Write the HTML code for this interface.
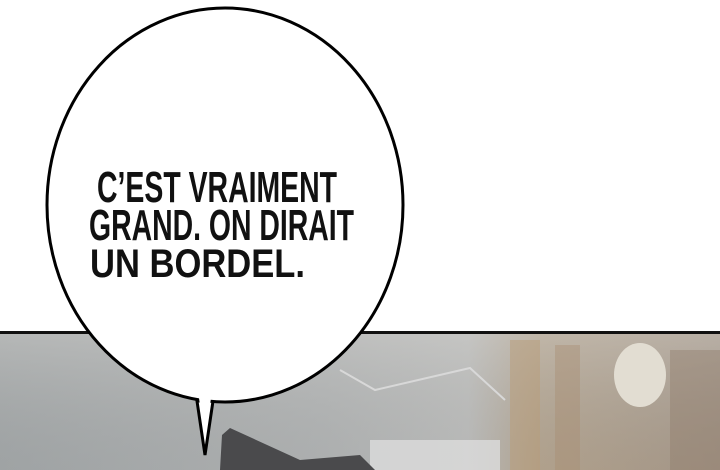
<!DOCTYPE html>
<html><head><meta charset="utf-8"><style>
html,body{margin:0;padding:0;width:720px;height:470px;overflow:hidden;background:#fff}
</style></head><body>
<svg width="720" height="470" viewBox="0 0 720 470" xmlns="http://www.w3.org/2000/svg">
<defs>
<linearGradient id="bg" x1="0" y1="0" x2="1" y2="0">
<stop offset="0" stop-color="#a3a7a8"/>
<stop offset="0.45" stop-color="#b4b6b6"/>
<stop offset="0.65" stop-color="#c2c2c0"/>
<stop offset="0.75" stop-color="#b8a48a"/>
<stop offset="1" stop-color="#a89684"/>
</linearGradient>
<linearGradient id="fade" x1="0" y1="0" x2="0" y2="1">
<stop offset="0" stop-color="#c8c8c6" stop-opacity="0.5"/>
<stop offset="1" stop-color="#8e9294" stop-opacity="0.2"/>
</linearGradient>
</defs>
<rect x="0" y="333" width="720" height="137" fill="url(#bg)"/>
<rect x="0" y="333" width="720" height="137" fill="url(#fade)"/>
<rect x="510" y="340" width="30" height="130" fill="#b89c78" opacity="0.5"/>
<rect x="555" y="345" width="25" height="125" fill="#a88c70" opacity="0.4"/>
<ellipse cx="640" cy="375" rx="26" ry="32" fill="#e2ddd2"/>
<rect x="670" y="350" width="50" height="120" fill="#8e7a68" opacity="0.4"/>
<polyline points="340,370 375,390 470,368 505,400" fill="none" stroke="#d8d8d8" stroke-width="2"/>
<rect x="370" y="440" width="130" height="30" fill="#dcdcdc" opacity="0.8"/>
<path d="M222,435 L230,428 L300,460 L360,455 L375,470 L220,470 Z" fill="#4a4a4c"/>
<rect x="0" y="331" width="720" height="3" fill="#111"/>
<path d="M197,401 L205,455 L213,401 Z" fill="#fff" stroke="#000" stroke-width="3" stroke-linejoin="miter"/>
<ellipse cx="225" cy="205" rx="178" ry="197" fill="#fff" stroke="#000" stroke-width="3"/>
<path d="M199,398 L205,440 L211,398 Z" fill="#fff"/>
<g font-family="'Liberation Sans',sans-serif" font-weight="bold" fill="#111">
<text x="97" y="202" font-size="44" textLength="240" lengthAdjust="spacingAndGlyphs">C’EST VRAIMENT</text>
<text x="89" y="240" font-size="44" textLength="265" lengthAdjust="spacingAndGlyphs">GRAND. ON DIRAIT</text>
<text x="90" y="277" font-size="40" textLength="215" lengthAdjust="spacingAndGlyphs">UN BORDEL.</text>
</g>
</svg>
</body></html>
